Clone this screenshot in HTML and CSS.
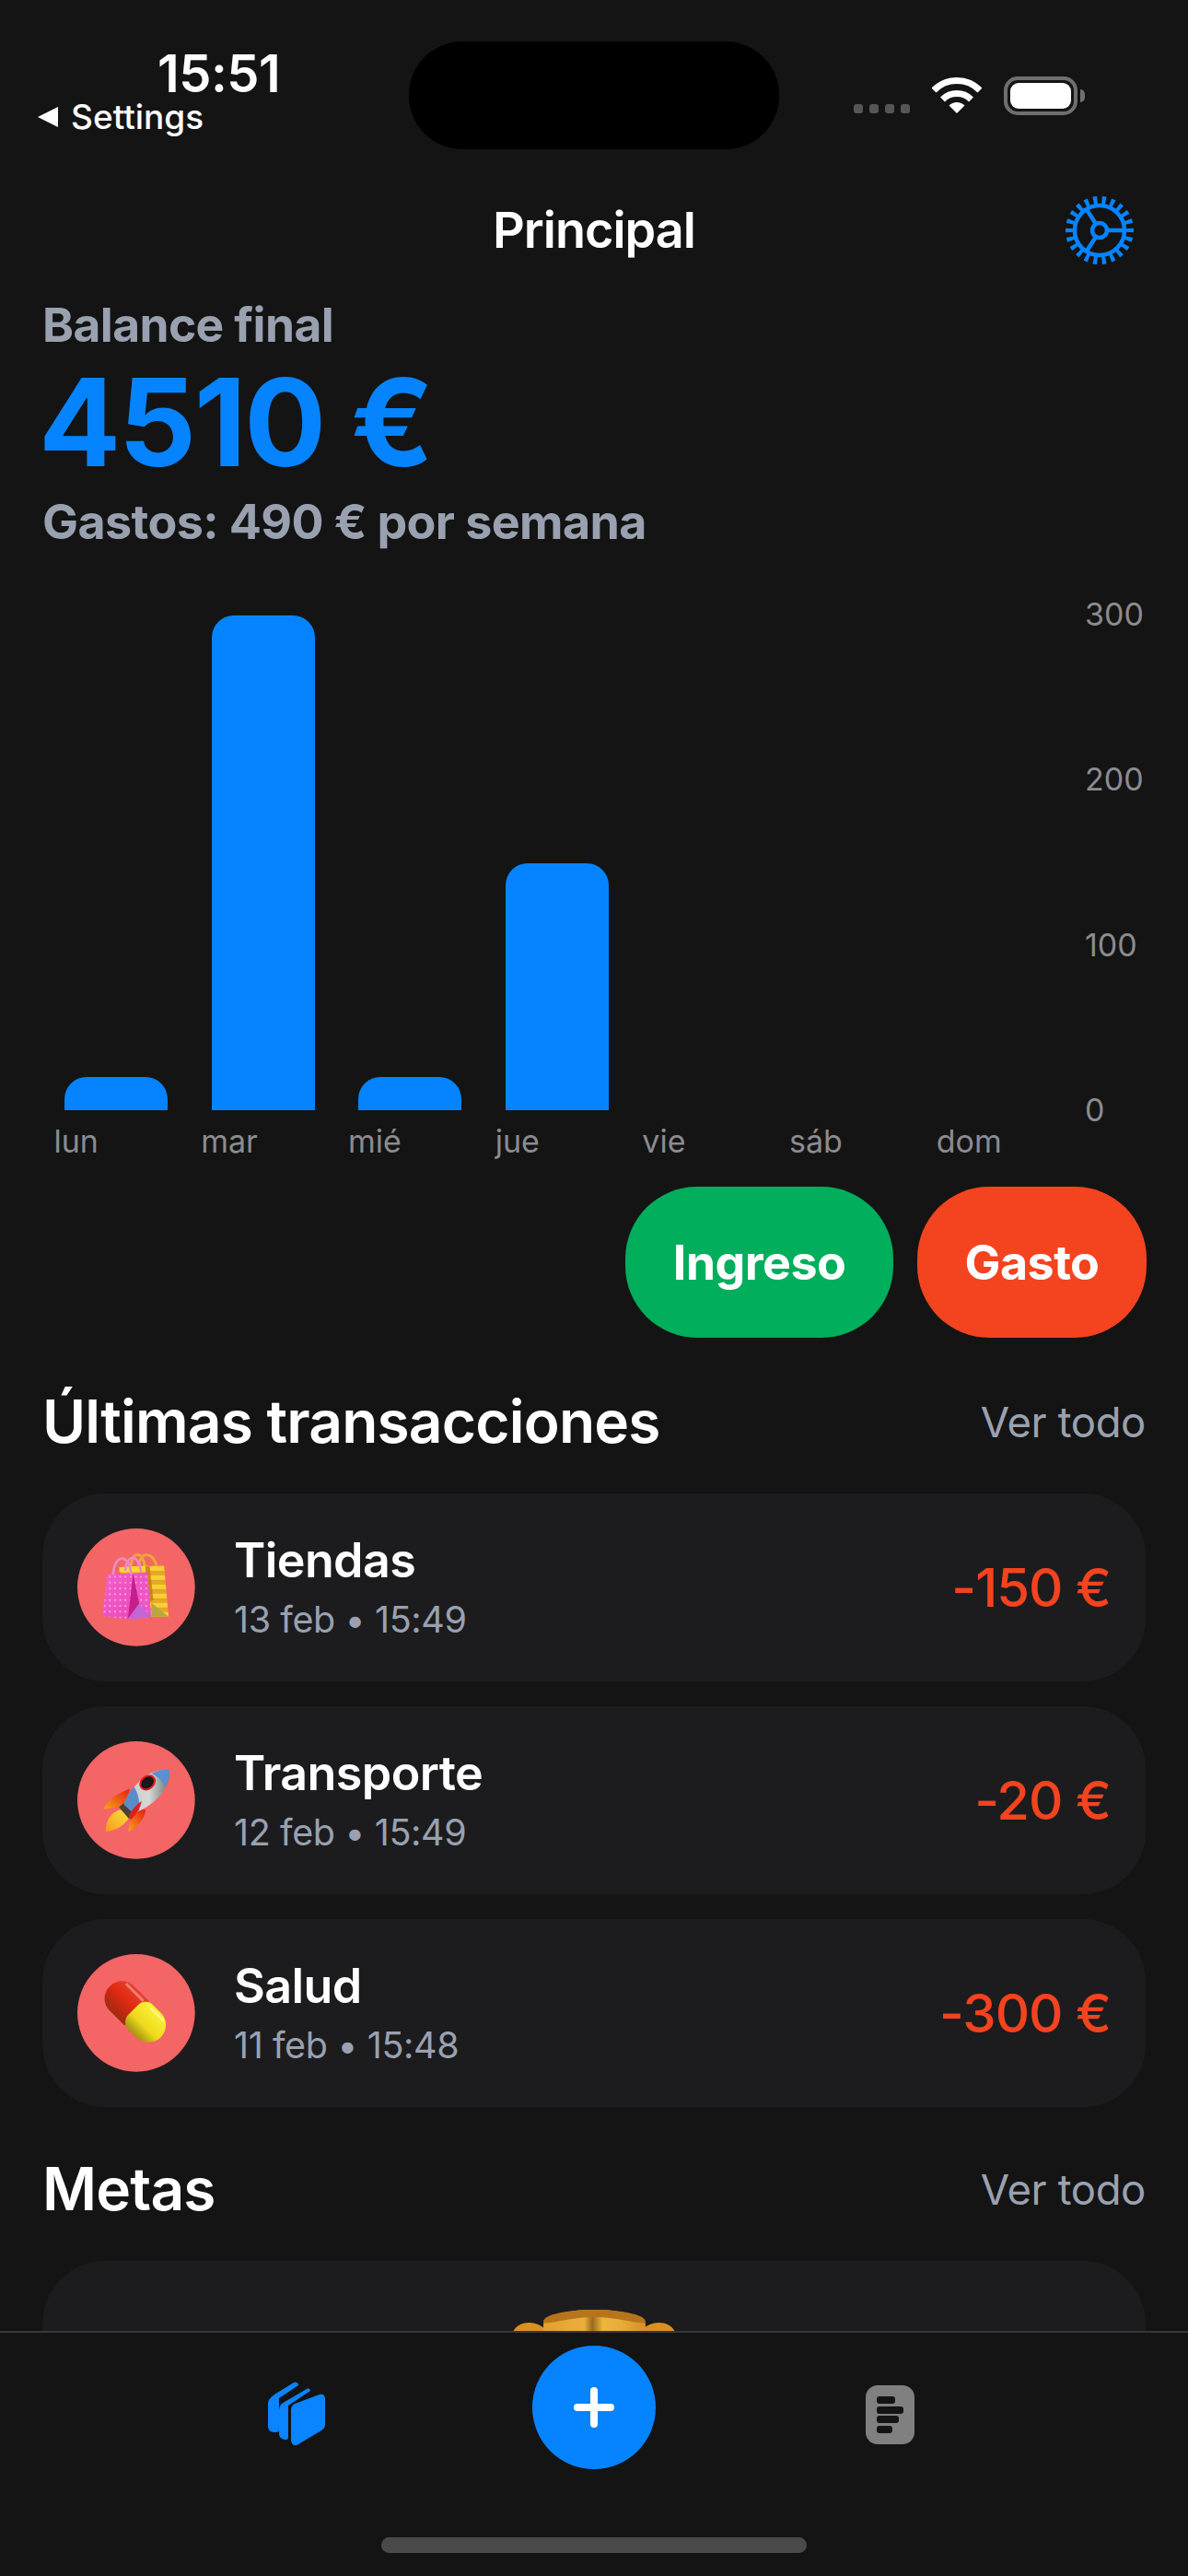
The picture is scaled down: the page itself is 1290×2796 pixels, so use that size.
FILE: index.html
```html
<!DOCTYPE html>
<html lang="es">
  <head>
    <meta charset="UTF-8" />
    <meta name="viewport" content="width=device-width, initial-scale=1.0" />
    <title>Principal</title>
    <link rel="stylesheet" href="styles.css">
  </head>
  <body>
    <div class="screen">
      <main class="content">
        <div class="status-bar">
          <div class="status-left">
            <div class="clock">15:51</div>
            <div class="back-link"><span class="back-arrow"></span>Settings</div>
          </div>
          <div class="island"></div>
          <div class="status-right">
            <div class="signal"><span></span><span></span><span></span><span></span></div>
            <svg class="wifi" viewBox="0 0 54 40" width="54" height="40">
              <path d="M2 14A35 35 0 0 1 52 14" fill="none" stroke="#fff" stroke-width="7" />
              <path d="M11.5 24A22 22 0 0 1 42.5 24" fill="none" stroke="#fff" stroke-width="7" />
              <path d="M27 39L18.5 30.5A12 12 0 0 1 35.5 30.5Z" fill="#fff" />
            </svg>
            <div class="battery"><div class="battery-level"></div></div>
            <div class="battery-tip"></div>
          </div>
        </div>

        <header class="nav">
          <h1>Principal</h1>
          <svg class="gear" viewBox="0 0 80 80" width="80" height="80" fill="none" stroke="#0684ff">
            <circle cx="40" cy="40" r="32" stroke-width="10" pathLength="44" stroke-dasharray="0.9 1.1" stroke-dashoffset="0.45" />
            <circle cx="40" cy="40" r="27" stroke-width="4.5" />
            <circle cx="40" cy="40" r="8" stroke-width="4.5" />
            <path d="M48 40H66M36 33L25 16M36 47L25 64" stroke-width="4.5" />
          </svg>
        </header>

        <section class="balance">
          <div class="balance-label">Balance final</div>
          <div class="balance-value">4510 €</div>
          <div class="balance-label balance-weekly">Gastos: 490 € por semana</div>
        </section>

        <section class="chart">
          <div class="plot">
            <div class="slot"><div class="bar" style="height: 36px"></div></div>
            <div class="slot"><div class="bar" style="height: 537px"></div></div>
            <div class="slot"><div class="bar" style="height: 36px"></div></div>
            <div class="slot"><div class="bar" style="height: 268px"></div></div>
            <div class="slot"></div>
            <div class="slot"></div>
            <div class="slot"></div>
          </div>
          <div class="y-axis">
            <span>300</span>
            <span>200</span>
            <span>100</span>
            <span>0</span>
          </div>
          <div class="x-axis">
            <span>lun</span>
            <span>mar</span>
            <span>mié</span>
            <span>jue</span>
            <span>vie</span>
            <span>sáb</span>
            <span>dom</span>
          </div>
        </section>

        <div class="actions">
          <button class="income">Ingreso</button>
          <button class="expense">Gasto</button>
        </div>

        <div class="section-head">
          <h2>Últimas transacciones</h2>
          <a class="see-all">Ver todo</a>
        </div>

        <div class="transactions">
          <div class="transaction">
            <svg class="emoji" viewBox="70 57 385 385" width="128" height="128">
              <defs>
                <linearGradient id="bagPink" x1="0" y1="0" x2="1" y2="1">
                  <stop offset="0" stop-color="#f65fc8" />
                  <stop offset="1" stop-color="#ea48bd" />
                </linearGradient>
                <pattern id="bagDots" width="17" height="19" patternUnits="userSpaceOnUse">
                  <circle cx="6" cy="6" r="3" fill="#fbb4e6" />
                </pattern>
                <pattern id="bagStripes" width="30" height="30" patternUnits="userSpaceOnUse">
                  <rect width="30" height="16" fill="#f6d12f" />
                  <rect y="16" width="30" height="14" fill="#e5a62c" />
                </pattern>
              </defs>
              <circle cx="262" cy="249" r="192" fill="#f46565" />
              <path d="M245 180C248 130 285 130 290 180M270 178C278 128 318 135 328 178" fill="none" stroke="#eda63a" stroke-width="9" />
              <path d="M207 183L353 177L368 345H310L240 300Z" fill="url(#bagStripes)" />
              <path d="M207 183L306 178L300 200L207 200Z" fill="#f7d92f" />
              <path d="M306 178L318 290L300 300L292 180Z" fill="#c8741c" opacity="0.8" />
              <path d="M312 300L368 345H312Z" fill="#b9a63e" />
              <path d="M168 205L252 204L235 355L152 342Z" fill="url(#bagPink)" />
              <path d="M168 205L252 204L235 355L152 342Z" fill="url(#bagDots)" />
              <path d="M252 204L298 200L312 345L235 355Z" fill="#f055c4" />
              <path d="M252 204L298 200L312 345L235 355Z" fill="url(#bagDots)" />
              <path d="M252 204L272 302L235 352Z" fill="#c51f8c" />
              <path d="M272 302L312 345L235 355Z" fill="#c466d8" />
              <path d="M187 208C190 140 240 135 246 208M226 195C232 135 272 140 278 200" fill="none" stroke="#ec8ac8" stroke-width="8" />
            </svg>
            <div class="transaction-info">
              <div class="transaction-name">Tiendas</div>
              <div class="transaction-date">13 feb • 15:49</div>
            </div>
            <div class="transaction-amount">-150 €</div>
          </div>

          <div class="transaction">
            <svg class="emoji" viewBox="70 57 385 385" width="128" height="128">
              <defs>
                <linearGradient id="rocketBody" x1="0" y1="1" x2="1" y2="1">
                  <stop offset="0" stop-color="#c6cac9" />
                  <stop offset="0.55" stop-color="#d5d8d6" />
                  <stop offset="1" stop-color="#6f7472" />
                </linearGradient>
                <linearGradient id="rocketFin" x1="1" y1="0" x2="0" y2="1">
                  <stop offset="0" stop-color="#e81b10" />
                  <stop offset="1" stop-color="#f9a318" />
                </linearGradient>
                <linearGradient id="rocketFlame" x1="1" y1="0" x2="0" y2="1">
                  <stop offset="0" stop-color="#fde13a" />
                  <stop offset="1" stop-color="#f59a1d" />
                </linearGradient>
              </defs>
              <circle cx="262" cy="249" r="192" fill="#f46565" />
              <path d="M155 278C170 245 205 225 242 212L225 262C205 272 180 276 155 278Z" fill="url(#rocketFin)" />
              <path d="M237 352C236 325 248 300 262 280L293 280C290 310 268 335 237 352Z" fill="url(#rocketFin)" />
              <path d="M163 352C160 320 180 285 212 280L240 305C225 330 195 350 163 352Z" fill="url(#rocketFlame)" />
              <path d="M206 272L222 258L254 290L238 310Z" fill="#4a4038" />
              <path d="M370 150C315 145 260 180 222 262L254 292C330 262 378 205 370 150Z" fill="url(#rocketBody)" />
              <path d="M370 150C350 148 330 153 312 163C335 172 350 190 355 205C368 190 373 168 370 150Z" fill="#5f8fd0" />
              <path d="M255 205C240 222 230 240 222 262L254 292L272 282C275 255 268 225 255 205Z" fill="#5a8cc8" />
              <ellipse cx="299" cy="192" rx="26" ry="20" transform="rotate(-40 299 192)" fill="#1b1718" stroke="#dd1c1c" stroke-width="6" />
              <path d="M238 298C248 282 262 264 280 252C276 275 262 298 244 314Z" fill="#d8231b" />
            </svg>
            <div class="transaction-info">
              <div class="transaction-name">Transporte</div>
              <div class="transaction-date">12 feb • 15:49</div>
            </div>
            <div class="transaction-amount">-20 €</div>
          </div>

          <div class="transaction">
            <svg class="emoji" viewBox="70 60 385 385" width="128" height="128">
              <defs>
                <linearGradient id="pillRed" x1="0" y1="0" x2="0" y2="1">
                  <stop offset="0" stop-color="#e8412e" />
                  <stop offset="0.45" stop-color="#e02a10" />
                  <stop offset="1" stop-color="#a02a12" />
                </linearGradient>
                <linearGradient id="pillYellow" x1="0" y1="0" x2="0" y2="1">
                  <stop offset="0" stop-color="#fdf337" />
                  <stop offset="0.6" stop-color="#efd91f" />
                  <stop offset="1" stop-color="#a39410" />
                </linearGradient>
                <clipPath id="pillClip">
                  <rect x="141" y="191" width="236" height="114" rx="57" />
                </clipPath>
              </defs>
              <circle cx="262" cy="252" r="192" fill="#f46565" />
              <g transform="rotate(45 259 248)">
                <g clip-path="url(#pillClip)">
                  <rect x="141" y="191" width="125" height="114" fill="url(#pillRed)" />
                  <rect x="250" y="191" width="130" height="114" rx="34" fill="url(#pillYellow)" />
                  <rect x="172" y="200" width="82" height="9" rx="4" fill="#fff" opacity="0.35" />
                  <rect x="285" y="200" width="62" height="8" rx="4" fill="#fff" opacity="0.4" />
                </g>
              </g>
            </svg>
            <div class="transaction-info">
              <div class="transaction-name">Salud</div>
              <div class="transaction-date">11 feb • 15:48</div>
            </div>
            <div class="transaction-amount">-300 €</div>
          </div>
        </div>

        <div class="section-head goals-head">
          <h2>Metas</h2>
          <a class="see-all">Ver todo</a>
        </div>

        <div class="goal-card">
          <svg class="trophy" viewBox="0 0 176 60" width="176" height="60">
            <defs>
              <linearGradient id="trophyCup" x1="0" y1="0" x2="1" y2="0">
                <stop offset="0" stop-color="#e0a02e" />
                <stop offset="0.4" stop-color="#eab03a" />
                <stop offset="0.48" stop-color="#9c6a1c" />
                <stop offset="0.58" stop-color="#edb63e" />
                <stop offset="0.78" stop-color="#e6ab36" />
                <stop offset="1" stop-color="#d49024" />
              </linearGradient>
            </defs>
            <path d="M0 24C6 11 26 11 36 22V40H0ZM176 24C170 11 150 11 140 22V40H176Z" fill="#d9911f" />
            <path d="M33 16C33 6 60 0 88 0C116 0 144 6 144 16V60H33Z" fill="url(#trophyCup)" />
            <path d="M33 13C33 5 60 0 88 0C116 0 144 5 144 13C144 18 116 8 88 8C60 8 33 18 33 13Z" fill="#b8741a" />
          </svg>
        </div>
      </main>

      <nav class="tab-bar">
        <div class="tabs">
          <svg class="tab-icon" viewBox="0 0 62 70" width="62" height="70" fill="#0a84ff">
            <path d="M7 14L28 1C31 0 33 1 33 4L12 18V52C12 55 10 55 7 55C2 55 0 52 0 48V24C0 20 3 17 7 14Z" />
            <path d="M18 22L42 8C44 7 46 8 46 10L22 26V60C22 63 20 63 18 63C14 62 12 60 12 56V31C12 27 14 24 18 22Z" />
            <path d="M25 31C25 27 27 25 29 24L56 14C60 13 62 15 62 19V46C62 49 61 51 58 53L33 68C28 71 26 68 25 64Z" />
          </svg>
          <button class="add-button">
            <span class="plus"></span>
          </button>
          <div class="report-icon">
            <span class="line-a"></span>
            <span class="line-b"></span>
            <span class="line-c"></span>
            <span class="line-d"></span>
          </div>
        </div>
        <div class="home-indicator"></div>
      </nav>
    </div>
  </body>
</html>
```

FILE: styles.css
```css
* {
  box-sizing: border-box;
}
html,
body {
  margin: 0;
  padding: 0;
}
body {
  font-family: Inter, "Liberation Sans", sans-serif;
  background-color: #141414;
  color: #fff;
}
.screen {
  width: 1290px;
  height: 2796px;
  display: flex;
  flex-direction: column;
  overflow: hidden;
}
.content {
  height: 2530px;
  overflow: hidden;
  flex: none;
}
h1,
h2 {
  margin: 0;
}

/* status bar */
.status-bar {
  height: 190px;
  padding-top: 45px;
  display: flex;
  align-items: flex-start;
}
.status-left {
  width: 444px;
  height: 110px;
  padding-left: 41px;
}
.clock {
  font-size: 56px;
  font-weight: 600;
  line-height: 56px;
  margin-left: 130px;
  margin-top: 7px;
  letter-spacing: -0.5px;
}
.back-link {
  display: flex;
  align-items: center;
  font-size: 37px;
  font-weight: 500;
  line-height: 40px;
  margin-top: -1px;
}
.back-arrow {
  width: 0;
  height: 0;
  border-top: 11px solid transparent;
  border-bottom: 11px solid transparent;
  border-right: 22px solid #fff;
  margin-right: 14px;
}
.island {
  width: 402px;
  height: 117px;
  border-radius: 58px;
  background-color: #000;
}
.status-right {
  flex: 1;
  padding-left: 81px;
  padding-top: 38px;
  display: flex;
  align-items: flex-end;
}
.signal {
  display: flex;
  gap: 7px;
  margin-bottom: 2px;
}
.signal span {
  width: 10px;
  height: 10px;
  border-radius: 3px;
  background-color: #565656;
}
.wifi {
  margin-left: 24px;
  margin-bottom: 1px;
}
.battery {
  width: 80px;
  height: 42px;
  margin-left: 24px;
  padding: 3px;
  border: 4px solid #6f6f6f;
  border-radius: 15px;
}
.battery-level {
  height: 100%;
  background-color: #fff;
  border-radius: 9px;
}
.battery-tip {
  width: 5px;
  height: 14px;
  margin-left: 3px;
  margin-bottom: 14px;
  background-color: #6f6f6f;
  border-radius: 0 7px 7px 0;
}

/* navigation title */
.nav {
  height: 120px;
  display: flex;
  justify-content: center;
  align-items: center;
  position: relative;
}
.nav h1 {
  font-size: 54px;
  font-weight: 600;
  line-height: 60px;
  letter-spacing: -1px;
}
.gear {
  position: absolute;
  right: 56px;
  top: 20px;
}

/* balance */
.balance {
  padding: 12px 46px 0;
}
.balance-label {
  font-size: 51.5px;
  font-weight: 700;
  line-height: 60px;
  color: #99a1b0;
  letter-spacing: -0.6px;
}
.balance-value {
  font-size: 132px;
  font-weight: 700;
  line-height: 130px;
  color: #0684ff;
  margin-top: 11px;
  margin-left: -4px;
  letter-spacing: -2.4px;
}
.balance-weekly {
  margin-top: 14px;
  font-size: 52px;
}

/* chart */
.chart {
  margin-top: 70px;
  padding-left: 46px;
  display: grid;
  grid-template-columns: 1118px 1fr;
  grid-template-rows: 538px auto;
}
.plot {
  display: grid;
  grid-template-columns: repeat(7, 1fr);
  align-items: end;
  height: 538px;
}
.slot {
  display: flex;
  justify-content: center;
}
.bar {
  width: 112px;
  background-color: #0684ff;
  border-radius: 24px 24px 0 0;
}
.y-axis {
  margin: -18px 0;
  padding-left: 14px;
  display: flex;
  flex-direction: column;
  justify-content: space-between;
  font-size: 34px;
  line-height: 36px;
  color: #8b8b90;
}
.x-axis {
  display: grid;
  grid-template-columns: repeat(7, 1fr);
  padding-top: 16px;
  font-size: 34px;
  line-height: 36px;
  color: #8b8b90;
}
.x-axis span {
  padding-left: 12.5px;
}

/* action buttons */
.actions {
  margin-top: 31px;
  padding-right: 45px;
  display: flex;
  justify-content: flex-end;
  gap: 26px;
}
.actions button {
  height: 164px;
  border: none;
  border-radius: 78px;
  color: #fff;
  font-family: inherit;
  font-size: 52px;
  font-weight: 700;
  letter-spacing: -0.6px;
}
.income {
  width: 291px;
  background-color: #00ae5c;
}
.expense {
  width: 249px;
  background-color: #f4431f;
}

/* sections */
.section-head {
  margin-top: 55px;
  padding: 0 46px;
  display: flex;
  justify-content: space-between;
  align-items: center;
  height: 72px;
}
.section-head h2 {
  font-size: 64px;
  font-weight: 600;
  line-height: 72px;
  letter-spacing: -0.8px;
}
.see-all {
  font-size: 45.5px;
  color: #99a1b0;
  letter-spacing: -0.4px;
}
.transactions {
  margin-top: 42px;
  padding: 0 46px;
  display: flex;
  flex-direction: column;
  gap: 27px;
}
.transaction {
  height: 204px;
  padding: 0 38px;
  display: flex;
  align-items: center;
  background-color: #1c1c1e;
  border-radius: 68px;
}
.emoji {
  flex: none;
}
.transaction-info {
  flex: 1;
  margin-left: 42px;
  margin-top: -2px;
}
.transaction-name {
  font-size: 52px;
  font-weight: 600;
  line-height: 60px;
  letter-spacing: -0.6px;
}
.transaction-date {
  margin-top: 11px;
  font-size: 39.5px;
  line-height: 46px;
  color: #99a1b0;
  letter-spacing: -0.4px;
}
.transaction-amount {
  font-size: 58px;
  font-weight: 500;
  color: #f4431f;
  letter-spacing: -1px;
}
.goals-head {
  margin-top: 53px;
}
.goal-card {
  margin: 42px 46px 0;
  height: 300px;
  padding-top: 53px;
  display: flex;
  justify-content: center;
  align-items: flex-start;
  background-color: #1c1c1e;
  border-radius: 68px;
}

/* tab bar */
.tab-bar {
  flex: 1;
  border-top: 2px solid #38383a;
  background-color: #141414;
}
.tabs {
  height: 222px;
  padding-top: 14px;
  display: grid;
  grid-template-columns: 1fr 134px 1fr;
  align-items: start;
}
.tab-icon {
  justify-self: end;
  margin: 39px 225px 0 0;
}
.add-button {
  width: 134px;
  height: 134px;
  padding: 0;
  border: none;
  border-radius: 50%;
  background-color: #0684ff;
  display: flex;
  justify-content: center;
  align-items: center;
}
.plus {
  width: 44px;
  height: 44px;
  position: relative;
  display: block;
}
.plus::before,
.plus::after {
  content: "";
  position: absolute;
  background-color: #fff;
  border-radius: 4px;
}
.plus::before {
  left: 0;
  top: 18px;
  width: 44px;
  height: 8px;
}
.plus::after {
  left: 18px;
  top: 0;
  width: 8px;
  height: 44px;
}
.report-icon {
  width: 53px;
  height: 64px;
  margin: 43px 0 0 228px;
  padding: 12px 0 0 12px;
  background-color: #808080;
  border-radius: 13px;
  display: flex;
  flex-direction: column;
  gap: 2.5px;
}
.report-icon span {
  display: block;
  height: 8px;
  background-color: #141414;
  border-radius: 3px;
}
.line-a {
  width: 20px;
}
.line-b {
  width: 29px;
}
.line-c {
  width: 24px;
}
.line-d {
  width: 17px;
}
.home-indicator {
  width: 462px;
  height: 17px;
  margin: 0 auto;
  border-radius: 9px;
  background-color: #4a4a4a;
}
```
